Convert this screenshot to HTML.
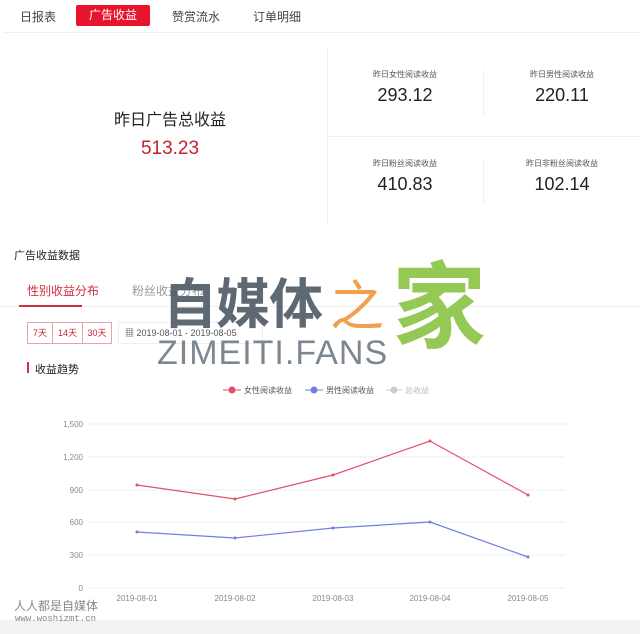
<!DOCTYPE html>
<html><head><meta charset="utf-8"><style>
body{margin:0;width:640px;height:634px;background:#fff;position:relative;overflow:hidden;font-family:"Liberation Sans","Noto Sans CJK SC",sans-serif;color:#222}
.a{position:absolute;white-space:nowrap}
</style></head><body>
<div class="a" style="left:20px;top:8px;font-size:12px;color:#444">日报表</div>
<div class="a" style="left:76px;top:5px;width:74px;height:21px;background:#e8132d;border-radius:2px;color:#fff;font-size:12px;line-height:21px;text-align:center">广告收益</div>
<div class="a" style="left:172px;top:8px;font-size:12px;color:#444">赞赏流水</div>
<div class="a" style="left:253px;top:8px;font-size:12px;color:#444">订单明细</div>
<div class="a" style="left:5px;top:32px;width:635px;height:1px;background:#eee"></div>

<div class="a" style="left:327px;top:48px;width:1px;height:175px;background:#eee"></div>
<div class="a" style="left:327px;top:136px;width:313px;height:1px;background:#eee"></div>
<div class="a" style="left:483px;top:70px;width:1px;height:45px;background:#eee"></div>
<div class="a" style="left:483px;top:160px;width:1px;height:45px;background:#eee"></div>

<div class="a" style="left:70px;top:106px;width:200px;text-align:center;font-size:16px">昨日广告总收益</div>
<div class="a" style="left:70px;top:138px;width:200px;text-align:center;font-size:19px;color:#c8202f">513.23</div>

<div class="a" style="left:330px;top:69px;width:150px;text-align:center;font-size:8px;color:#555">昨日女性阅读收益</div>
<div class="a" style="left:330px;top:85px;width:150px;text-align:center;font-size:18px">293.12</div>
<div class="a" style="left:487px;top:69px;width:150px;text-align:center;font-size:8px;color:#555">昨日男性阅读收益</div>
<div class="a" style="left:487px;top:85px;width:150px;text-align:center;font-size:18px">220.11</div>
<div class="a" style="left:330px;top:158px;width:150px;text-align:center;font-size:8px;color:#555">昨日粉丝阅读收益</div>
<div class="a" style="left:330px;top:174px;width:150px;text-align:center;font-size:18px">410.83</div>
<div class="a" style="left:487px;top:158px;width:150px;text-align:center;font-size:8px;color:#555">昨日非粉丝阅读收益</div>
<div class="a" style="left:487px;top:174px;width:150px;text-align:center;font-size:18px">102.14</div>

<div class="a" style="left:14px;top:247px;font-size:11px">广告收益数据</div>
<div class="a" style="left:27px;top:282px;font-size:12px;color:#d0303f">性别收益分布</div>
<div class="a" style="left:132px;top:282px;font-size:12px;color:#999">粉丝收益分布</div>
<div class="a" style="left:0;top:306px;width:640px;height:1px;background:#eee"></div>
<div class="a" style="left:19px;top:305px;width:63px;height:2px;background:#d0303f"></div>

<div class="a" style="left:27px;top:322px;width:83px;height:20px;border:1px solid #e7a3aa;display:flex;font-size:9px;color:#c8202f">
<div style="width:24px;text-align:center;line-height:20px;border-right:1px solid #e7a3aa">7天</div>
<div style="width:29px;text-align:center;line-height:20px;border-right:1px solid #e7a3aa">14天</div>
<div style="flex:1;text-align:center;line-height:20px">30天</div></div>
<div class="a" style="left:118px;top:322px;width:137px;height:20px;border:1px solid #eee;font-size:9px;color:#555;line-height:20px;padding-left:6px">▦ 2019-08-01 - 2019-08-05</div>

<div class="a" style="left:27px;top:362px;width:2px;height:11px;background:#d0303f"></div>
<div class="a" style="left:35px;top:361px;font-size:11px">收益趋势</div>

<svg class="a" style="left:0;top:380px" width="640" height="240" font-family="Liberation Sans,sans-serif">
<g font-size="8">
<line x1="223" y1="10" x2="241" y2="10" stroke="#e0526a"/><circle cx="232" cy="10" r="3.5" fill="#e0526a"/><text x="244" y="13" fill="#555" font-family="Noto Sans CJK SC">女性阅读收益</text>
<line x1="305" y1="10" x2="323" y2="10" stroke="#6f7ee0"/><circle cx="314" cy="10" r="3.5" fill="#6f7ee0"/><text x="326" y="13" fill="#555" font-family="Noto Sans CJK SC">男性阅读收益</text>
<line x1="386" y1="10" x2="402" y2="10" stroke="#ccc"/><circle cx="394" cy="10" r="3.5" fill="#ccc"/><text x="405" y="13" fill="#bbb" font-family="Noto Sans CJK SC">总收益</text>
</g>
<g stroke="#ddd" stroke-dasharray="1,1">
<line x1="88" y1="44" x2="565" y2="44"/><line x1="88" y1="77" x2="565" y2="77"/><line x1="88" y1="110" x2="565" y2="110"/><line x1="88" y1="142" x2="565" y2="142"/><line x1="88" y1="175" x2="565" y2="175"/><line x1="88" y1="208" x2="565" y2="208"/></g>
<g font-size="8" fill="#888" text-anchor="end">
<text x="83" y="47">1,500</text><text x="83" y="80">1,200</text><text x="83" y="113">900</text><text x="83" y="145">600</text><text x="83" y="178">300</text><text x="83" y="211">0</text></g>
<g font-size="8" fill="#888" text-anchor="middle">
<text x="137" y="221">2019-08-01</text><text x="235" y="221">2019-08-02</text><text x="333" y="221">2019-08-03</text><text x="430" y="221">2019-08-04</text><text x="528" y="221">2019-08-05</text></g>
<polyline points="137,105 235,119 333,95 430,61 528,115" fill="none" stroke="#e0526a" stroke-width="1.2"/>
<polyline points="137,152 235,158 333,148 430,142 528,177" fill="none" stroke="#6f7ee0" stroke-width="1.2"/>
<g fill="#e0526a"><circle cx="137" cy="105" r="1.5"/><circle cx="235" cy="119" r="1.5"/><circle cx="333" cy="95" r="1.5"/><circle cx="430" cy="61" r="1.5"/><circle cx="528" cy="115" r="1.5"/></g>
<g fill="#6f7ee0"><circle cx="137" cy="152" r="1.5"/><circle cx="235" cy="158" r="1.5"/><circle cx="333" cy="148" r="1.5"/><circle cx="430" cy="142" r="1.5"/><circle cx="528" cy="177" r="1.5"/></g>
</svg>

<div class="a" style="left:0;top:620px;width:640px;height:14px;background:#f2f2f2"></div>
<div class="a" style="left:14px;top:597px;font-size:12px;color:#888">人人都是自媒体</div>
<div class="a" style="left:15px;top:614px;font-size:9px;color:#888;font-family:'Liberation Mono',monospace">www.woshizmt.cn</div>

<div class="a" style="left:163px;top:274px;font-size:54px;font-weight:bold;color:rgba(80,92,104,0.92);letter-spacing:-1px;line-height:62px">自媒体</div>
<div class="a" style="left:330px;top:276px;font-size:54px;color:rgba(240,150,60,0.9);line-height:62px">之</div>
<div class="a" style="left:392px;top:258px;font-size:94px;font-weight:bold;color:rgba(140,196,70,0.92);line-height:100px">家</div>
<div class="a" style="left:157px;top:334px;font-size:34px;color:rgba(110,122,134,0.9);letter-spacing:1px;line-height:38px">ZIMEITI.FANS</div>
</body></html>
